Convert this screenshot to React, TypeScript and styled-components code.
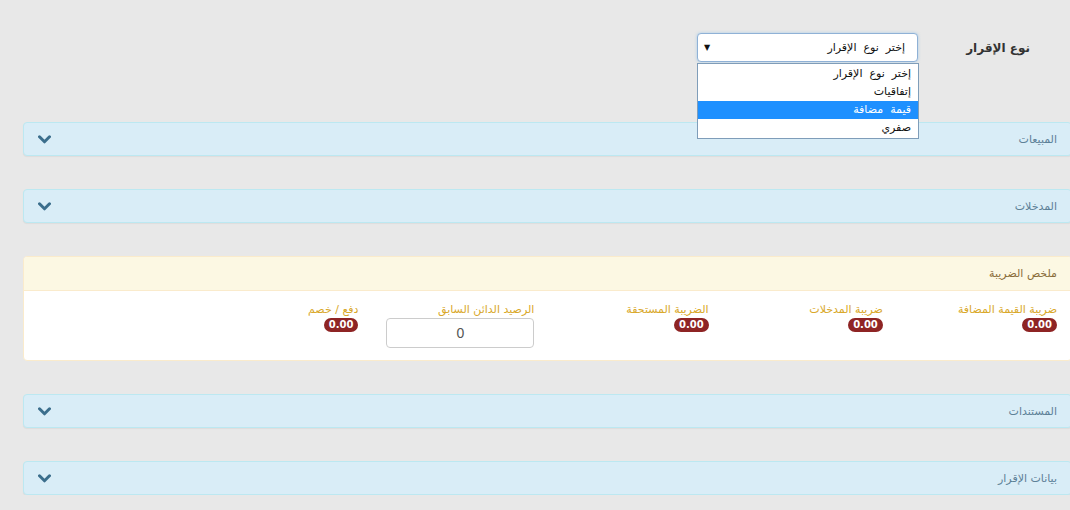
import React from "react";
import styled, { createGlobalStyle } from "styled-components";

const GlobalStyle = createGlobalStyle`
  html, body {
    margin: 0;
    padding: 0;
    background: #e8e8e8;
    overflow: hidden;
  }
  body {
    font-family: "DejaVu Sans", "Noto Sans", sans-serif;
  }
`;

const sections = ["المبيعات", "المدخلات"];
const lowerSections = ["المستندات", "بيانات الإقرار"];
const options = ["إختر  نوع  الإقرار", "إتفاقيات", "قيمة  مضافة", "صفري"];

const summary = [
  { label: "ضريبة القيمة المضافة", value: "0.00" },
  { label: "ضريبة المدخلات", value: "0.00" },
  { label: "الضريبة المستحقة", value: "0.00" },
  { label: "الرصيد الدائن السابق", input: "0" },
  { label: "دفع / خصم", value: "0.00" },
];

const Chevron = () => (
  <svg width="13" height="9" viewBox="0 0 13 9">
    <path d="M1.5 1.8 L6.5 6.8 L11.5 1.8" fill="none" stroke="#3b6e8c" strokeWidth="3" strokeLinecap="round" strokeLinejoin="round" />
  </svg>
);

const App: React.FC = () => {
  return (
    <>
      <GlobalStyle />
      <Page>
        <TopRow>
          <FieldLabel>نوع الإقرار</FieldLabel>
          <SelectWrap>
            <SelectBox>
              <span>{options[0]}</span>
              <Arrow>▼</Arrow>
            </SelectBox>
            <OptionList>
              {options.map((o, i) => (
                <Option key={o} $active={i === 2}>
                  {o}
                </Option>
              ))}
            </OptionList>
          </SelectWrap>
        </TopRow>

        <Panels>
          {sections.map((s) => (
            <InfoPanel key={s}>
              <PanelTitle>{s}</PanelTitle>
              <Chevron />
            </InfoPanel>
          ))}

          <WarnPanel>
            <WarnHeading>ملخص الضريبة</WarnHeading>
            <SummaryBody>
              {summary.map((c) => (
                <SummaryCol key={c.label}>
                  <GoldLabel>{c.label}</GoldLabel>
                  {c.input !== undefined ? (
                    <NumInput defaultValue={c.input} />
                  ) : (
                    <Badge>{c.value}</Badge>
                  )}
                </SummaryCol>
              ))}
            </SummaryBody>
          </WarnPanel>

          {lowerSections.map((s) => (
            <InfoPanel key={s}>
              <PanelTitle>{s}</PanelTitle>
              <Chevron />
            </InfoPanel>
          ))}
        </Panels>
      </Page>
    </>
  );
};

export default App;

const Page = styled.div`
  direction: rtl;
  width: 1049px;
  margin-left: 23px;
  padding-top: 33px;
`;

const TopRow = styled.div`
  display: flex;
  align-items: center;
  padding-right: 42px;
  height: 29px;
`;

const FieldLabel = styled.div`
  width: 112px;
  font-size: 12px;
  font-weight: bold;
  color: #333;
`;

const SelectWrap = styled.div`
  position: relative;
  width: 221px;
  z-index: 5;
`;

const SelectBox = styled.div`
  box-sizing: border-box;
  height: 29px;
  border: 1px solid #8fb1d6;
  border-radius: 4px;
  background: #fff;
  display: flex;
  align-items: center;
  justify-content: space-between;
  padding: 0 12px 0 6px;
  font-size: 11px;
  color: #111;
  white-space: pre;
  box-shadow: 0 0 3px rgba(102, 175, 233, 0.5);
`;

const Arrow = styled.span`
  font-size: 8px;
  color: #111;
`;

const OptionList = styled.div`
  position: absolute;
  top: 30px;
  right: -1px;
  width: 222px;
  box-sizing: border-box;
  border: 1px solid #7f9db9;
  background: #fff;
  padding: 1px 0;
`;

const Option = styled.div<{ $active?: boolean }>`
  height: 18px;
  line-height: 18px;
  padding: 0 7px;
  font-size: 11px;
  white-space: pre;
  color: ${(p) => (p.$active ? "#fff" : "#111")};
  background: ${(p) => (p.$active ? "#1e90ff" : "transparent")};
`;

const Panels = styled.div`
  display: flex;
  flex-direction: column;
  gap: 33px;
  margin-top: 60px;
`;

const InfoPanel = styled.div`
  box-sizing: border-box;
  height: 34px;
  border: 1px solid #bce8f1;
  border-radius: 4px;
  background: #d9edf7;
  display: flex;
  align-items: center;
  justify-content: space-between;
  padding: 0 14px 0 14px;
  box-shadow: 0 1px 1px rgba(0, 0, 0, 0.05);
`;

const PanelTitle = styled.div`
  font-size: 11px;
  color: #5d8197;
`;

const WarnPanel = styled.div`
  border: 1px solid #faebcc;
  border-radius: 4px;
  background: #fff;
  overflow: hidden;
`;

const WarnHeading = styled.div`
  height: 33px;
  line-height: 33px;
  background: #fcf8e3;
  border-bottom: 1px solid #faebcc;
  padding: 0 14px;
  font-size: 11px;
  color: #8a6d3b;
`;

const SummaryBody = styled.div`
  display: grid;
  grid-template-columns: repeat(6, 1fr);
  height: 69px;
  padding: 11px 0 0;
  box-sizing: border-box;
`;

const SummaryCol = styled.div`
  display: flex;
  flex-direction: column;
  align-items: flex-start;
  padding: 0 14px;
`;

const GoldLabel = styled.div`
  font-size: 11px;
  color: #d9a82a;
  line-height: 15px;
`;

const Badge = styled.span`
  margin-top: 1px;
  background: #8e2424;
  color: #fff;
  font-family: "DejaVu Sans", sans-serif;
  font-weight: bold;
  font-size: 10px;
  line-height: 14px;
  padding: 0 5px;
  border-radius: 8px;
`;

const NumInput = styled.input`
  margin-top: 1px;
  box-sizing: border-box;
  width: 148px;
  height: 30px;
  border: 1px solid #ccc;
  border-radius: 4px;
  background: #fff;
  text-align: center;
  font-family: "Liberation Sans", Arial, sans-serif;
  font-size: 14px;
  color: #555;
  direction: ltr;
  outline: none;
`;
